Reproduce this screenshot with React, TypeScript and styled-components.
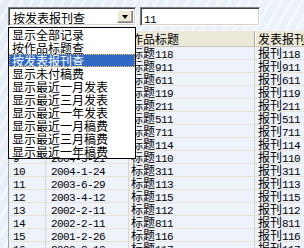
import React from 'react';
import styled, { createGlobalStyle } from 'styled-components';

const Global = createGlobalStyle`
  html, body { margin: 0; padding: 0; }
  body {
    width: 304px;
    height: 248px;
    overflow: hidden;
    font-family: "Noto Sans CJK SC", "Liberation Sans", sans-serif;
    font-size: 12px;
    color: #000;
    background: #edf2f8;
  }
`;

const Page = styled.div`
  position: relative;
  width: 304px;
  height: 248px;
  overflow: hidden;
  background:
    repeating-linear-gradient(120deg, rgba(255,255,255,0.45) 0 3px, rgba(255,255,255,0) 3px 9px),
    linear-gradient(135deg, #e4ecf6, #f2f6fb);
`;

const Latin = styled.span`
  font-family: "Liberation Mono", monospace;
  font-size: 11px;
  letter-spacing: -0.6px;
`;

const CJK_RE = /([\u4e00-\u9fff]+)/;

function Txt({ children }: { children: string }) {
  const parts = children.split(CJK_RE).filter(Boolean);
  return (
    <>
      {parts.map((p, i) =>
        /[\u4e00-\u9fff]/.test(p) ? <span key={i}>{p}</span> : <Latin key={i}>{p}</Latin>
      )}
    </>
  );
}

const Toolbar = styled.div`
  display: flex;
  align-items: flex-start;
  gap: 4px;
  height: 31px;
  box-sizing: border-box;
  padding: 7px 0 0 8px;
`;

const sunken = `
  box-sizing: border-box;
  border: 1px solid;
  border-color: #808080 #ffffff #ffffff #808080;
  box-shadow: inset 1px 1px 0 #404040, inset -1px -1px 0 #d4d0c8;
  background: #fff;
`;

const SelectBox = styled.div`
  ${sunken}
  width: 128px;
  height: 19px;
  display: flex;
  align-items: stretch;
  padding: 2px;
`;

const SelectText = styled.div`
  flex: 1;
  line-height: 15px;
  padding-left: 2px;
  white-space: nowrap;
`;

const DropButton = styled.div`
  box-sizing: border-box;
  width: 16px;
  background: #ece9d8;
  border: 1px solid;
  border-color: #ffffff #808080 #808080 #ffffff;
  box-shadow: inset -1px -1px 0 #aca899;
  display: flex;
  align-items: center;
  justify-content: center;
`;

const Arrow = styled.div`
  width: 0;
  height: 0;
  border-left: 3.5px solid transparent;
  border-right: 3.5px solid transparent;
  border-top: 4px solid #000;
`;

const InputBox = styled.div`
  ${sunken}
  width: 120px;
  height: 19px;
  padding: 2px 3px;
  line-height: 15px;
`;

const DropList = styled.div`
  position: absolute;
  left: 8px;
  top: 27px;
  width: 128px;
  box-sizing: border-box;
  border: 1px solid #000;
  background: #fff;
  z-index: 5;
`;

const DropItem = styled.div<{ $active?: boolean }>`
  box-sizing: border-box;
  height: 13px;
  line-height: 13px;
  padding-left: 3px;
  white-space: nowrap;
  background: ${(p) => (p.$active ? '#316ac5' : 'transparent')};
  color: ${(p) => (p.$active ? '#fff' : '#000')};
  outline: ${(p) => (p.$active ? '1px dotted #f0c060' : 'none')};
  outline-offset: -1px;
`;

const Grid = styled.div`
  margin-left: 8px;
  display: grid;
  grid-template-columns: 37px 83px 126px 90px;
  border-left: 1px solid #a0a0a0;
  width: max-content;
`;

const HeadCell = styled.div<{ $pad: number }>`
  box-sizing: border-box;
  height: 16px;
  line-height: 15px;
  padding-left: ${(p) => p.$pad}px;
  background: #ece9d8;
  border-bottom: 1px solid #c5c2b2;
  border-right: 1px solid #aca899;
  box-shadow: inset 1px 0 0 #ffffff;
  white-space: nowrap;
  overflow: hidden;
`;

const Cell = styled.div<{ $pad: number }>`
  box-sizing: border-box;
  height: 13px;
  line-height: 12px;
  padding-left: ${(p) => p.$pad}px;
  background: #eef2fb;
  border-bottom: 1px solid #e6e3d4;
  border-right: 1px solid #dcd8c8;
  white-space: nowrap;
  overflow: hidden;
`;

const options = [
  '显示全部记录',
  '按作品标题查',
  '按发表报刊查',
  '显示未付稿费',
  '显示最近一月发表',
  '显示最近三月发表',
  '显示最近一年发表',
  '显示最近一月稿费',
  '显示最近三月稿费',
  '显示最近一年稿费',
];

const nums = ['118', '911', '611', '119', '211', '511', '711', '114', '110', '311', '113', '115', '112', '811', '116', '117'];
const dates = [
  '2005-3-18', '2005-2-11', '2005-1-26', '2004-12-9', '2004-10-8', '2004-8-15', '2004-6-11', '2004-5-20',
  '2004-3-21', '2004-1-24', '2003-6-29', '2003-4-12', '2002-2-11', '2002-2-11', '2001-2-26', '2000-8-18',
];

const pads = [4, 5, 2, 3];

export default function App() {
  return (
    <Page>
      <Global />
      <Toolbar>
        <SelectBox>
          <SelectText>按发表报刊查</SelectText>
          <DropButton>
            <Arrow />
          </DropButton>
        </SelectBox>
        <InputBox>
          <Txt>11</Txt>
        </InputBox>
      </Toolbar>
      <Grid>
        <HeadCell $pad={pads[0]}>编号</HeadCell>
        <HeadCell $pad={pads[1]}>发表日期</HeadCell>
        <HeadCell $pad={pads[2]}>作品标题</HeadCell>
        <HeadCell $pad={pads[3]}>发表报刊</HeadCell>
        {nums.map((n, i) => (
          <React.Fragment key={i}>
            <Cell $pad={pads[0]}><Txt>{String(i + 1)}</Txt></Cell>
            <Cell $pad={pads[1]}><Txt>{dates[i]}</Txt></Cell>
            <Cell $pad={pads[2]}><Txt>{'标题' + n}</Txt></Cell>
            <Cell $pad={pads[3]}><Txt>{'报刊' + n}</Txt></Cell>
          </React.Fragment>
        ))}
      </Grid>
      <DropList>
        {options.map((o, i) => (
          <DropItem key={o} $active={i === 2}>{o}</DropItem>
        ))}
      </DropList>
    </Page>
  );
}
